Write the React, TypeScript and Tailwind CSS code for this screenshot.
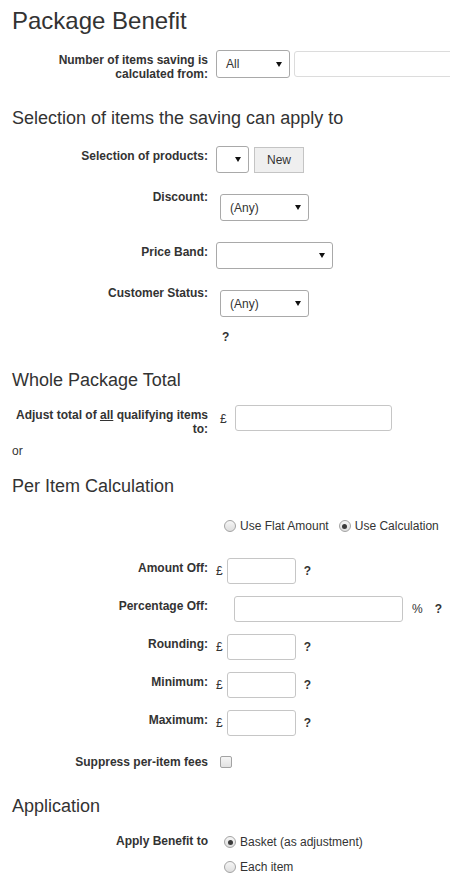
import type { ReactNode } from "react";
import clsx from "clsx";

function Label({ children, className }: { children?: ReactNode; className?: string }) {
  return (
    <div className={clsx("w-[196px] shrink-0 text-right text-[12px] font-bold leading-[14px]", className)}>
      {children}
    </div>
  );
}

function Select({ value, className }: { value?: string; className?: string }) {
  return (
    <div
      className={clsx(
        "flex shrink-0 items-center justify-between rounded-[3px] border border-[#a9a9a9] bg-white pl-[9px] pr-[7px] text-[12px]",
        className
      )}
    >
      <span>{value}</span>
      <svg width="6" height="5" viewBox="0 0 6 5">
        <path d="M0 0h6L3 5z" fill="#111" />
      </svg>
    </div>
  );
}

function TextBox({ className }: { className?: string }) {
  return <div className={clsx("shrink-0 rounded-[3px] border border-[#c6c6c6] bg-white", className)} />;
}

function Radio({ checked }: { checked?: boolean }) {
  return (
    <span className="flex h-[12px] w-[12px] shrink-0 items-center justify-center rounded-full border border-[#a3a3a3] bg-linear-to-b from-[#f6f6f6] to-[#dedede]">
      {checked && <span className="h-[5px] w-[5px] rounded-full bg-[#3a3a3a]" />}
    </span>
  );
}

function Help({ className }: { className?: string }) {
  return <span className={clsx("text-[12px] font-bold leading-[14px]", className)}>?</span>;
}

function Heading({ children, className }: { children: ReactNode; className?: string }) {
  return <h2 className={clsx("text-[18px] leading-[20px] font-normal", className)}>{children}</h2>;
}

// row with a £ prefix, a small box and a help mark
function MoneyRow({ label, className }: { label: string; className?: string }) {
  return (
    <div className={clsx("flex gap-2", className)}>
      <Label className="pt-[3px]">{label}</Label>
      <div className="flex items-center">
        <span className="text-[12px] leading-[14px]">£</span>
        <TextBox className="ml-1 h-[26px] w-[69px]" />
        <Help className="ml-2" />
      </div>
    </div>
  );
}

export default function App() {
  return (
    <div className="min-h-[879px] w-[450px] overflow-hidden bg-white px-3 pt-2 font-['Liberation_Sans',Arial,sans-serif] text-[#333]">
      <h1 className="text-[24px] leading-[26px] font-normal">Package Benefit</h1>

      <div className="mt-4 flex gap-2">
        <Label className="pt-[3px]">
          Number of items saving is
          <br />
          calculated from:
        </Label>
        <div className="flex gap-1">
          <Select value="All" className="h-[28px] w-[74px]" />
          <TextBox className="mt-px h-[26px] w-[200px] border-[#dcdcdc]" />
        </div>
      </div>

      <Heading className="mt-[27px]">Selection of items the saving can apply to</Heading>

      <div className="mt-[18px] flex gap-2">
        <Label className="pt-[3px]">Selection of products:</Label>
        <div className="flex gap-[5px]">
          <Select className="h-[27px] w-[33px]" />
          <button className="mt-px h-[26px] w-[50px] border border-[#c4c4c4] bg-[#efefef] text-[12px] text-[#333]">
            New
          </button>
        </div>
      </div>

      <div className="mt-[17px] flex gap-2">
        <Label>Discount:</Label>
        <div className="pl-1 pt-1">
          <Select value="(Any)" className="h-[27px] w-[89px]" />
        </div>
      </div>

      <div className="mt-[21px] flex gap-2">
        <Label className="pt-[3px]">Price Band:</Label>
        <Select className="h-[27px] w-[117px]" />
      </div>

      <div className="mt-[17px] flex gap-2">
        <Label>Customer Status:</Label>
        <div className="flex flex-col items-start pl-1 pt-1">
          <Select value="(Any)" className="h-[27px] w-[89px]" />
          <Help className="mt-[13px] pl-[2px]" />
        </div>
      </div>

      <Heading className="mt-[26px]">Whole Package Total</Heading>

      <div className="mt-[15px] flex gap-2">
        <Label className="pt-[3px]">
          Adjust total of <u>all</u> qualifying items
          <br />
          to:
        </Label>
        <div className="flex items-start pl-1">
          <span className="pt-[7px] text-[12px] leading-[14px]">£</span>
          <TextBox className="ml-2 h-[26px] w-[157px]" />
        </div>
      </div>

      <p className="mt-2 text-[12px] leading-[14px]">or</p>

      <Heading className="mt-[18px]">Per Item Calculation</Heading>

      <div className="mt-[23px] flex gap-2">
        <div className="w-[196px] shrink-0" />
        <div className="flex items-center whitespace-nowrap pl-2 text-[12px] leading-[14px]">
          <Radio />
          <span className="ml-1">Use Flat Amount</span>
          <span className="ml-[10px]">
            <Radio checked />
          </span>
          <span className="ml-1">Use Calculation</span>
        </div>
      </div>

      <MoneyRow label="Amount Off:" className="mt-[25px]" />

      <div className="mt-3 flex gap-2">
        <Label className="pt-[3px]">Percentage Off:</Label>
        <div className="flex items-center pl-[18px] text-[12px] leading-[14px]">
          <TextBox className="h-[26px] w-[169px]" />
          <span className="ml-[9px]">%</span>
          <Help className="ml-3" />
        </div>
      </div>

      <MoneyRow label="Rounding:" className="mt-3" />
      <MoneyRow label="Minimum:" className="mt-3" />
      <MoneyRow label="Maximum:" className="mt-3" />

      <div className="mt-[19px] flex gap-2">
        <Label>Suppress per-item fees</Label>
        <span className="ml-1 mt-px h-[12px] w-[12px] rounded-[2px] border border-[#a3a3a3] bg-linear-to-b from-[#f6f6f6] to-[#e2e2e2]" />
      </div>

      <Heading className="mt-[27px]">Application</Heading>

      <div className="mt-[18px] flex gap-2">
        <Label>Apply Benefit to</Label>
        <div className="flex flex-col gap-[11px] whitespace-nowrap pl-2 pt-px text-[12px] leading-[14px]">
          <label className="flex items-center gap-1">
            <Radio checked />
            Basket (as adjustment)
          </label>
          <label className="flex items-center gap-1">
            <Radio />
            Each item
          </label>
        </div>
      </div>
    </div>
  );
}
